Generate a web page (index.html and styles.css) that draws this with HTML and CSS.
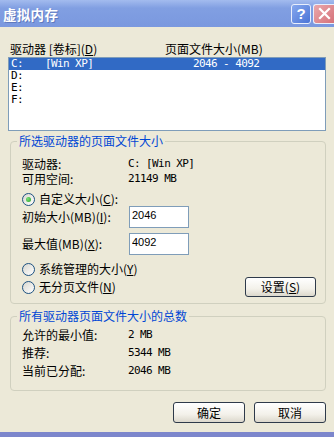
FILE: index.html
```html
<!DOCTYPE html>
<html lang="zh-CN">
<head>
    <meta charset="UTF-8">
    <title>虚拟内存</title>
    <link rel="stylesheet" href="styles.css">
</head>
<body>

    <div class="titlebar">
        <span class="title">虚拟内存</span>
        <span class="tb-btn help">?</span>
        <span class="tb-btn close">
            <svg width="13" height="13" viewBox="0 0 13 13"><path d="M2 2 L11 11 M11 2 L2 11" stroke="#fff" stroke-width="2.2" stroke-linecap="square"/></svg>
        </span>
    </div>

    <div class="content">
        <div class="list-head">
            <span>驱动器 [卷标](<u>D</u>)</span>
            <span>页面文件大小(MB)</span>
        </div>
        <div class="drive-list">
            <div class="drive-row selected"><span>C:</span><span>[Win XP]</span><span>2046 - 4092</span></div>
            <div class="drive-row"><span>D:</span></div>
            <div class="drive-row"><span>E:</span></div>
            <div class="drive-row"><span>F:</span></div>
        </div>

        <fieldset class="group group-drive">
            <legend>所选驱动器的页面文件大小</legend>
            <div class="info-row"><span>驱动器:</span><span class="val">C: [Win XP]</span></div>
            <div class="info-row"><span>可用空间:</span><span class="val">21149 MB</span></div>

            <div class="radio-row first"><span class="radio on"></span>自定义大小(<u>C</u>):</div>
            <div class="field-row">
                <label for="initial">初始大小(MB)(<u>I</u>):</label>
                <input type="text" id="initial" value="2046">
            </div>
            <div class="field-row second">
                <label for="max">最大值(MB)(<u>X</u>):</label>
                <input type="text" id="max" value="4092">
            </div>
            <div class="radio-row system"><span class="radio"></span>系统管理的大小(<u>Y</u>)</div>
            <div class="radio-row last">
                <span class="radio-label"><span class="radio"></span>无分页文件(<u>N</u>)</span>
                <button class="btn set">设置(<u>S</u>)</button>
            </div>
        </fieldset>

        <fieldset class="group group-total">
            <legend>所有驱动器页面文件大小的总数</legend>
            <div class="total-row"><span>允许的最小值:</span><span class="val">2 MB</span></div>
            <div class="total-row"><span>推荐:</span><span class="val">5344 MB</span></div>
            <div class="total-row"><span>当前已分配:</span><span class="val">2046 MB</span></div>
        </fieldset>

        <div class="dlg-buttons">
            <button class="btn">确定</button>
            <button class="btn">取消</button>
        </div>
    </div>

    <div class="frame-bottom"></div>

</body>
</html>
```

FILE: styles.css
```css
body {
    margin: 0;
    width: 334px;
    height: 437px;
    overflow: hidden;
    background-color: #ece9d8;
    font-family: "Noto Sans CJK SC", sans-serif;
    font-size: 12px;
    line-height: 14px;
    color: #000;
}
u {
    text-decoration: underline;
    text-underline-offset: 1px;
}

/* title bar */
.titlebar {
    height: 27px;
    display: flex;
    align-items: center;
    background: linear-gradient(#a3bbee, #819fe2 30%, #7a98df);
}
.title {
    flex: 1;
    padding-left: 3px;
    color: #fff;
    font-weight: bold;
    font-size: 13.5px;
    letter-spacing: 0.3px;
    text-shadow: 1px 1px #6079bd;
}
.tb-btn {
    box-sizing: border-box;
    height: 20px;
    display: flex;
    align-items: center;
    justify-content: center;
    border: 1px solid #e8eefc;
    border-radius: 3px;
}
.help {
    width: 20px;
    margin-right: 2px;
    background: linear-gradient(135deg, #86a8ee, #4b74d6);
    color: #fff;
    font: bold 15px "Liberation Sans", sans-serif;
}
.close {
    width: 21px;
    border-right: none;
    border-radius: 3px 0 0 3px;
    background: linear-gradient(135deg, #eaa7ab, #d5727a);
}

.content {
    padding: 14px 8px 0;
}

/* drive list */
.list-head {
    display: grid;
    grid-template-columns: 155px 1fr;
    padding-left: 2px;
    height: 15px;
    line-height: 15px;
}
.drive-list {
    box-sizing: border-box;
    height: 74px;
    margin-top: 1px;
    border: 1px solid #7f9db9;
    background: #fff;
}
.drive-row {
    display: grid;
    grid-template-columns: 34px 148px 1fr;
    height: 12px;
    line-height: 12px;
    padding-left: 2px;
    font-family: "DejaVu Sans Mono", monospace;
    font-size: 11px;
    letter-spacing: -0.6px;
}
.selected {
    background: #316ac5;
    color: #fff;
}

/* group boxes */
.group {
    margin: 3px 0 0 2px;
    padding: 9px 9px 6px 11px;
    border: 1px solid #d0d0bf;
    border-radius: 4px;
    min-width: 0;
}
.group legend {
    padding: 0 2px;
    margin-left: -5px;
    color: #0046d5;
    line-height: 14px;
}
.group-total {
    margin-top: 5px;
    padding-top: 3px;
    padding-bottom: 10px;
}
.info-row {
    display: grid;
    grid-template-columns: 106px 1fr;
    height: 15px;
    line-height: 14px;
}
.total-row {
    display: grid;
    grid-template-columns: 106px 1fr;
    height: 18px;
    line-height: 18px;
}
.val {
    font-family: "DejaVu Sans Mono", monospace;
    font-size: 11px;
    letter-spacing: -0.6px;
    white-space: pre;
}

.radio-row {
    display: flex;
    align-items: center;
    height: 14px;
}
.radio-row.first {
    margin-top: 5px;
}
.radio-row.system {
    margin-top: 7px;
}
.radio-row.last {
    height: 20px;
    margin-top: 1px;
    justify-content: space-between;
}
.radio-label {
    display: flex;
    align-items: center;
}
.radio {
    box-sizing: border-box;
    width: 13px;
    height: 13px;
    margin-right: 4px;
    border: 1px solid #1c5180;
    border-radius: 50%;
    background: linear-gradient(135deg, #d8d7cf, #fff);
    display: inline-flex;
    align-items: center;
    justify-content: center;
}
.radio.on::after {
    content: "";
    width: 5px;
    height: 5px;
    border-radius: 50%;
    background: radial-gradient(circle at 35% 35%, #7be07b, #21a121);
}

.field-row {
    display: grid;
    grid-template-columns: 107px 60px;
    align-items: center;
    height: 22px;
}
.field-row.second {
    margin-top: 5px;
}
.field-row input {
    box-sizing: border-box;
    width: 60px;
    height: 22px;
    margin: 0;
    padding: 1px 2px 5px;
    border: 1px solid #7f9db9;
    background: #fff;
    font: 11px "Liberation Sans", sans-serif;
    color: #000;
    outline: none;
}

/* buttons */
.btn {
    box-sizing: border-box;
    height: 20px;
    width: 72px;
    padding: 0;
    border: 1px solid #2e3a4a;
    border-radius: 3px;
    background: linear-gradient(#fff, #f3f1ea 60%, #dcd8cc);
    font-family: "Noto Sans CJK SC", sans-serif;
    font-size: 12px;
    line-height: 18px;
    color: #000;
}
.btn.set {
    width: 71px;
}
.dlg-buttons {
    display: flex;
    justify-content: flex-end;
    gap: 9px;
    margin-top: 11px;
}
.dlg-buttons .btn {
    height: 21px;
}

.frame-bottom {
    height: 10px;
    margin-top: 9px;
    background: #7c86cc;
}
```
